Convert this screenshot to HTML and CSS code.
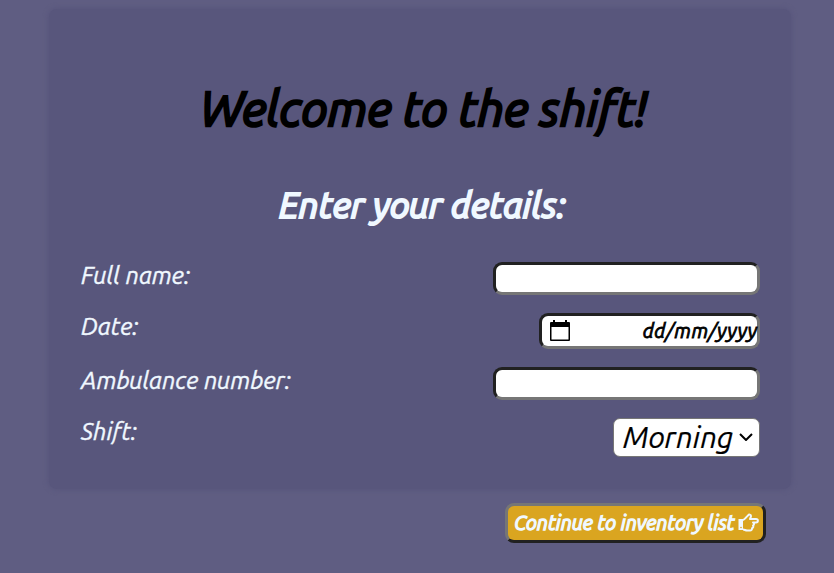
FILE: index.html
```html
<!DOCTYPE html>
<html lang="en">
<head>
<meta charset="utf-8">
<title>Welcome to the shift!</title>
<link rel="stylesheet" href="styles.css">
</head>
<body>
<main class="panel">
  <h1 class="title">Welcome to the shift!</h1>
  <h2 class="subtitle">Enter your details:</h2>
  <form class="form">
    <div class="row"><label class="l-name" for="name">Full name:</label><input id="name" class="field" type="text"></div>
    <div class="row row-date"><span class="label l-date">Date:</span>
      <div class="field date">
        <svg class="calendar" viewBox="0 0 20 21" width="20" height="21"><path d="M1 2h2V0h2v2h10V0h2v2h2q1 0 1 1v17q0 1-1 1H1q-1 0-1-1V3q0-1 1-1zM1.500 7v12.500h17V7z" fill="#000" fill-rule="evenodd"/></svg>
        <span class="date-text">dd/mm/yyyy</span>
      </div>
    </div>
    <div class="row"><label class="l-number" for="number">Ambulance number:</label><input id="number" class="field" type="text"></div>
    <div class="row row-shift"><span class="label l-shift">Shift:</span>
      <div class="select"><span class="select-text">Morning</span><svg class="chevron" viewBox="0 0 14 8" width="14" height="8"><path d="M1 1l6 6 6-6" fill="none" stroke="#000" stroke-width="2"/></svg></div>
    </div>
  </form>
</main>
<div class="actions">
  <button class="continue" type="button"><span class="continue-text">Continue to inventory list</span><svg class="hand" viewBox="0 0 21 20" width="21" height="20"><path d="M.5 6H5v11H.5z" fill="#f0f8ff"/><circle cx="3" cy="14.5" r=".8" fill="#daa520"/><path d="M5 7c2-.5 3-3 5-4.500C11 1 13 1.500 13 3c0 1-.7 2-1 3h6c2.500 0 2.500 3.500 0 3.500h-3c1.500.5 1.300 2.500 0 3 .7 1 .2 2.300-1 2.700.3 1.300-.7 2.300-2 2.300H9c-1.500 0-2.500-1-4-1" fill="none" stroke="#f0f8ff" stroke-width="2" stroke-linejoin="round"/></svg></button>
</div>
</body>
</html>
```
FILE: styles.css
```css
* { box-sizing: border-box; }
body {
  margin: 0;
  height: 573px;
  padding: 9px 43px 0 49px;
  background: #5f5d82;
  color: #f0f8ff;
  font-family: Ubuntu, "Open Sans", "Noto Sans", sans-serif;
  font-style: italic;
  overflow: hidden;
}
.panel {
  height: 480px;
  padding: 64px 31px 0 32px;
  border-radius: 8px;
  background: #58567c;
  box-shadow: 0 0 5px 1px #58567c;
}
h1, h2 { margin: 0; text-align: center; white-space: nowrap; }
.title { height: 70px; padding-left: 6px; line-height: 70px; font-size: 48px; font-weight: 400; color: #000; -webkit-text-stroke: 2.5px currentColor; }
.subtitle { height: 60px; margin-top: 32px; padding-left: 4px; line-height: 60px; font-size: 36px; font-weight: 400; -webkit-text-stroke: 2.1px currentColor; }
.form { margin-top: 18px; padding-top: 9px; }
.row { display: flex; justify-content: space-between; align-items: flex-start; height: 51px; }
.row-date { height: 54px; }
label, .label { font-size: 24px; line-height: 28px; white-space: nowrap; -webkit-text-stroke: .4px currentColor; }
.field {
  width: 267px;
  height: 33px;
  padding: 0;
  border: 3px solid;
  border-color: #212121 #767676 #767676 #212121;
  border-radius: 9px;
  background: #fff;
}
.date { display: flex; justify-content: space-between; width: 221px; height: 36px; color: #000; }
.calendar { margin: 4px 0 0 8px; }
.date-text { font-size: 20px; line-height: 30px; font-weight: 400; letter-spacing: .5px; margin-right: -.5px; white-space: nowrap; -webkit-text-stroke: .8px currentColor; }
.select {
  display: flex;
  align-items: center;
  justify-content: space-between;
  width: 147px;
  height: 39px;
  padding: 0 6px 0 9px;
  border: 1px solid #767676;
  border-radius: 7px;
  background: #fff;
  color: #000;
}
.select-text { font-size: 30px; line-height: 36px; margin-top: -1px; -webkit-text-stroke: .2px currentColor; }
.chevron { margin-top: -2px; }
.actions { display: flex; justify-content: flex-end; padding: 14px 25px 0 0; }
.continue {
  display: flex;
  align-items: center;
  justify-content: space-between;
  width: 261px;
  height: 40px;
  padding: 0 4px 0 6px;
  border: 3px solid;
  border-color: #767676 #212121 #212121 #767676;
  border-radius: 9px;
  background: #daa520;
  color: #f0f8ff;
  font: italic 400 20px/30px Ubuntu, "Open Sans", "Noto Sans", sans-serif;
  white-space: nowrap;
}
.continue-text { -webkit-text-stroke: 1.3px currentColor; }
.hand { margin-top: -1px; }
```
